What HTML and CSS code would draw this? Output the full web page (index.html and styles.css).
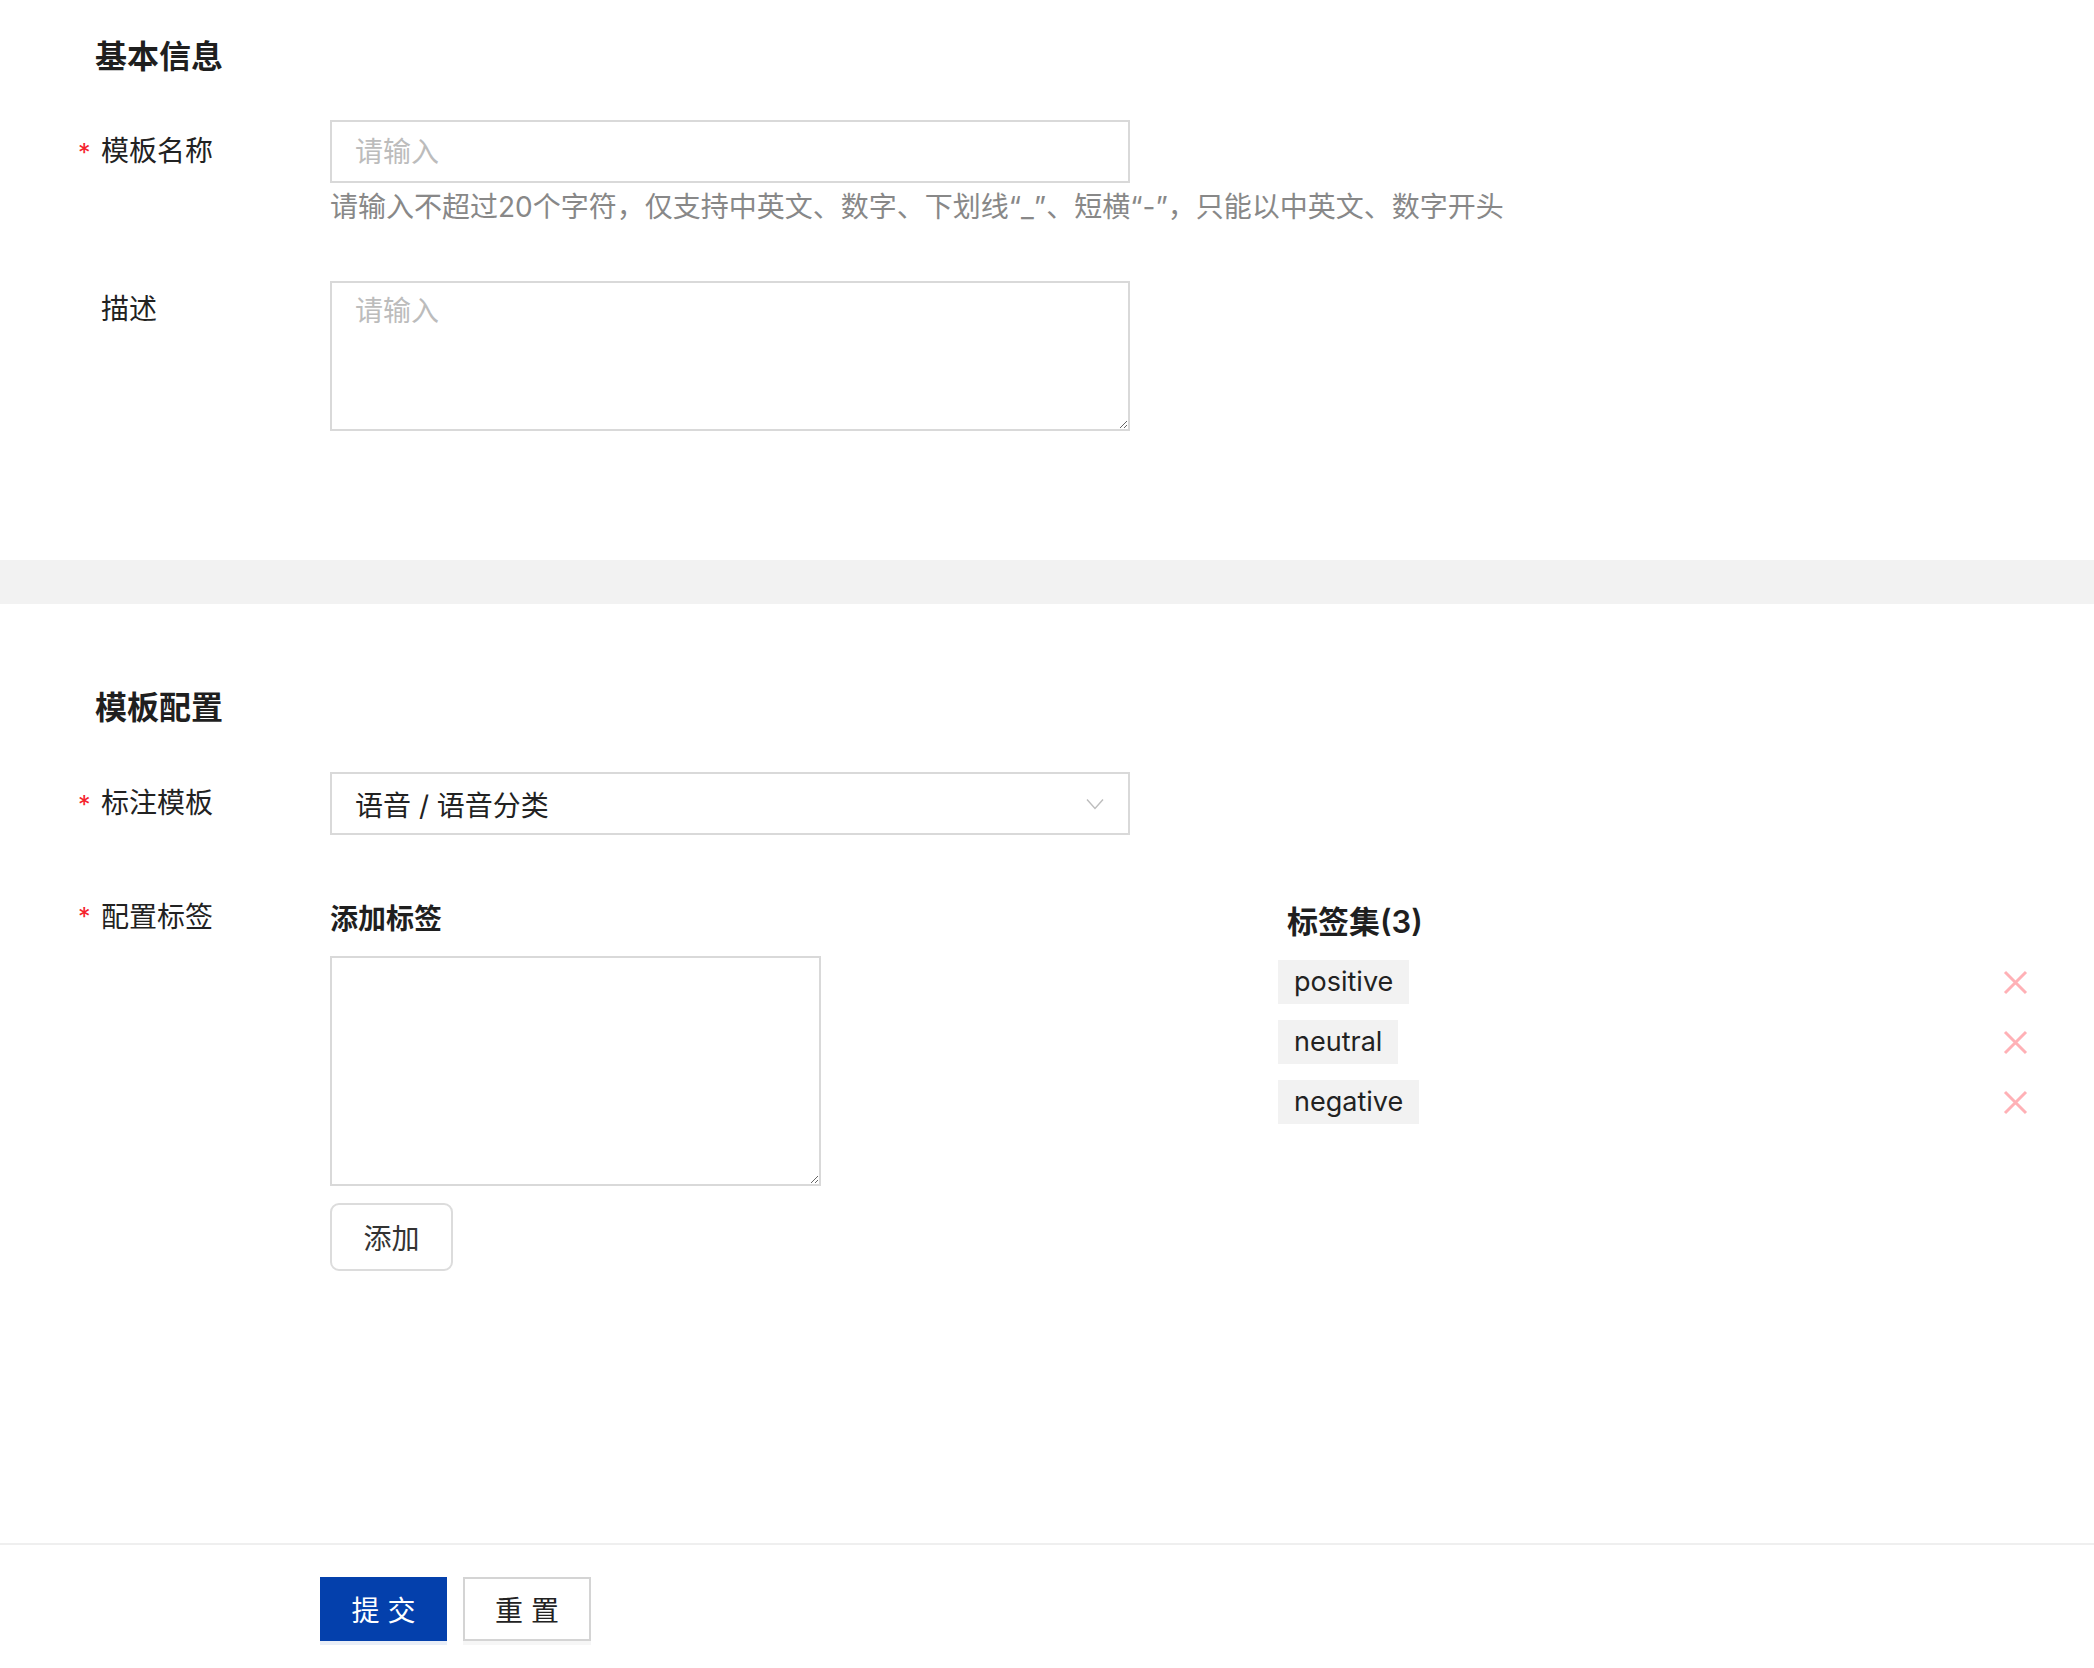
FILE: index.html
```html
<!DOCTYPE html>
<html lang="zh-CN">
<head>
<meta charset="utf-8">
<title>模板</title>
<link rel="stylesheet" href="styles.css">
</head>
<body>
<div class="section basic">
  <h2 class="sec-title">基本信息</h2>
  <div class="row">
    <label class="label req">模板名称</label>
    <div class="control">
      <input class="input" type="text" placeholder="请输入">
      <div class="hint">请输入不超过20个字符，仅支持中英文、数字、下划线“_”、短横“-”，只能以中英文、数字开头</div>
    </div>
  </div>
  <div class="row row-desc">
    <label class="label top">描述</label>
    <div class="control">
      <textarea class="textarea" placeholder="请输入"></textarea>
    </div>
  </div>
</div>
<div class="band"></div>
<div class="section config">
  <h2 class="sec-title">模板配置</h2>
  <div class="row">
    <label class="label req">标注模板</label>
    <div class="control">
      <div class="select">
        <span>语音 / 语音分类</span>
        <svg class="chev" width="18" height="12" viewBox="0 0 18 12"><polyline points="1,1.5 9,10.5 17,1.5" fill="none" stroke="#bdbdbd" stroke-width="1.4"/></svg>
      </div>
    </div>
  </div>
  <div class="row tag-row">
    <label class="label req small">配置标签</label>
    <div class="add-col">
      <div class="sub-title">添加标签</div>
      <textarea class="tag-input"></textarea>
      <button class="btn-add" type="button">添加</button>
    </div>
    <div class="set-col">
      <div class="set-title">标签集(3)</div>
      <ul class="tag-list">
        <li class="tag-item"><span class="tag">positive</span><svg class="del" width="25" height="25" viewBox="0 0 25 25"><path d="M2 2L23 23M23 2L2 23" stroke="#ffb1b6" stroke-width="3" fill="none"/></svg></li>
        <li class="tag-item"><span class="tag">neutral</span><svg class="del" width="25" height="25" viewBox="0 0 25 25"><path d="M2 2L23 23M23 2L2 23" stroke="#ffb1b6" stroke-width="3" fill="none"/></svg></li>
        <li class="tag-item"><span class="tag">negative</span><svg class="del" width="25" height="25" viewBox="0 0 25 25"><path d="M2 2L23 23M23 2L2 23" stroke="#ffb1b6" stroke-width="3" fill="none"/></svg></li>
      </ul>
    </div>
  </div>
</div>
<div class="footer">
  <button class="btn btn-primary" type="button">提 交</button>
  <button class="btn btn-default" type="button">重 置</button>
</div>
</body>
</html>
```
FILE: styles.css
```css
* { box-sizing: border-box; }
html, body { background: #fff; }
body {
  margin: 0;
  font-family: Inter, "Noto Sans CJK SC", sans-serif;
  color: #222;
}
.sec-title {
  margin: 0;
  padding-left: 95px;
  font-size: 32px;
  font-weight: 700;
  line-height: 40px;
  color: #1f1f1f;
}
.basic { padding: 37px 0 129px; }
.basic .sec-title { margin-bottom: 43px; }
.config { padding: 84px 0 272px; }
.config .sec-title { margin-bottom: 44px; }
.row {
  display: grid;
  grid-template-columns: 330px 800px;
}
.label {
  position: relative;
  padding-left: 101px;
  font-size: 28px;
  line-height: 63px;
  color: #222;
}
.label.top { line-height: 56px; }
.label.small { line-height: 36px; padding-top: 3px; }
.label.req::before {
  content: "*";
  position: absolute;
  left: 78px;
  top: 2px;
  color: #f5222d;
  font-size: 25px;
}
.label.small::before { top: 3px; }
.input {
  display: block;
  width: 800px;
  height: 63px;
  border: 2px solid #d9d9d9;
  border-radius: 0;
  padding: 0 23px;
  font: inherit;
  font-size: 28px;
  color: #222;
  outline: none;
}
.input::placeholder, .textarea::placeholder { color: #bcbcbc; }
.hint {
  margin-top: 4px;
  font-size: 28px;
  line-height: 40px;
  color: #888;
  white-space: nowrap;
}
.row-desc { margin-top: 54px; }
.textarea {
  display: block;
  width: 800px;
  height: 150px;
  border: 2px solid #d9d9d9;
  border-radius: 0;
  padding: 8px 23px;
  font: inherit;
  font-size: 28px;
  line-height: 40px;
  color: #222;
  outline: none;
  resize: vertical;
}
.band { height: 44px; background: #f2f2f2; }
.select {
  display: flex;
  align-items: center;
  justify-content: space-between;
  width: 800px;
  height: 63px;
  border: 2px solid #d9d9d9;
  padding: 0 24px 0 23px;
  font-size: 28px;
  color: #222;
}
.chev { display: block; }
.tag-row {
  margin-top: 61px;
  grid-template-columns: 330px 948px 749px;
}
.add-col { display: flex; flex-direction: column; align-items: flex-start; }
.sub-title {
  padding-top: 3px;
  font-size: 28px;
  font-weight: 600;
  line-height: 40px;
  color: #1f1f1f;
}
.tag-input {
  display: block;
  margin-top: 17px;
  width: 491px;
  height: 230px;
  border: 2px solid #d9d9d9;
  border-radius: 0;
  font: inherit;
  font-size: 28px;
  outline: none;
}
.btn-add {
  margin-top: 17px;
  width: 123px;
  height: 68px;
  border: 2px solid #dcdcdc;
  border-radius: 9px;
  background: #fff;
  font-family: inherit;
  font-size: 28px;
  color: #333;
  padding: 0;
}
.set-title {
  padding: 3px 0 0 9px;
  font-size: 31px;
  font-weight: 600;
  line-height: 46px;
  color: #1f1f1f;
}
.tag-list {
  list-style: none;
  margin: 15px 0 0;
  padding: 0;
  display: flex;
  flex-direction: column;
  gap: 16px;
}
.tag-item {
  display: flex;
  align-items: center;
  justify-content: space-between;
}
.tag {
  display: inline-block;
  height: 44px;
  line-height: 44px;
  padding: 0 16px;
  background: #f2f2f2;
  font-size: 27px;
  color: #222;
}
.del { display: block; margin-top: 1px; margin-right: -1px; }
.footer {
  border-top: 2px solid #efefef;
  padding: 32px 0 0 320px;
  height: 124px;
  display: flex;
  align-items: flex-start;
  gap: 16px;
}
.btn {
  height: 64px;
  padding: 0;
  font-family: inherit;
  font-size: 28px;
  border-radius: 0;
}
.btn-primary {
  width: 127px;
  background: #0440ac;
  border: none;
  color: #fff;
  box-shadow: 0 4px 0 #e9eef7;
}
.btn-default {
  width: 128px;
  background: #fff;
  border: 2px solid #d4d4d4;
  color: #222;
  box-shadow: 0 4px 0 #f6f6f6;
}
```
